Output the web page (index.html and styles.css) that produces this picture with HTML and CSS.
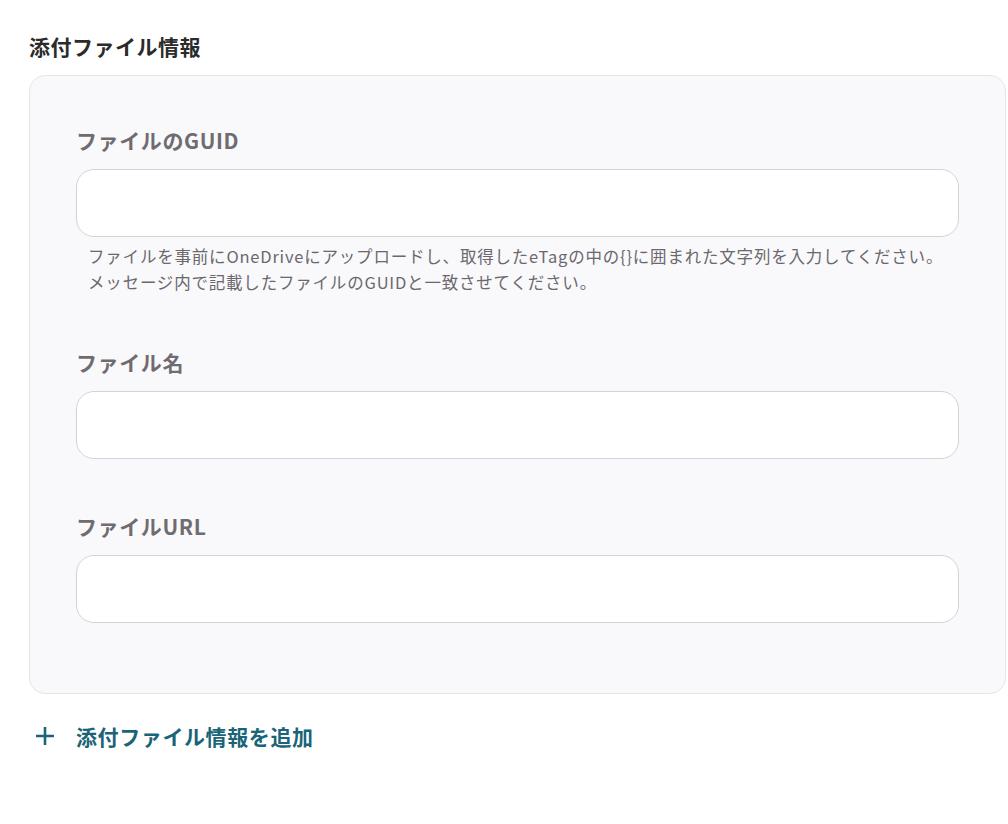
FILE: index.html
```html
<!DOCTYPE html>
<html lang="ja">
<head>
<meta charset="utf-8">
<link rel="stylesheet" href="styles.css">
</head>
<body>
<div class="page">
  <h2 class="title">添付ファイル情報</h2>
  <div class="panel">
    <div class="field">
      <label class="label">ファイルのGUID</label>
      <div class="input"></div>
      <p class="help">ファイルを事前にOneDriveにアップロードし、取得したeTagの中の{}に囲まれた文字列を入力してください。<br>メッセージ内で記載したファイルのGUIDと一致させてください。</p>
    </div>
    <div class="field">
      <label class="label">ファイル名</label>
      <div class="input"></div>
    </div>
    <div class="field">
      <label class="label">ファイルURL</label>
      <div class="input"></div>
    </div>
  </div>
  <div class="add">
    <svg class="plus" width="20" height="20" viewBox="0 0 20 20"><path d="M10 1v18M1 10h18" stroke="currentColor" stroke-width="2.6" fill="none"/></svg>
    <span>添付ファイル情報を追加</span>
  </div>
</div>
</body>
</html>
```
FILE: styles.css
```css
html, body {
  margin: 0;
  padding: 0;
  background: #ffffff;
}
body {
  font-family: "Noto Sans CJK JP", "Noto Sans", sans-serif;
}
.page {
  padding: 31px 2px 0 29px;
}
.title {
  margin: 0;
  font-size: 21px;
  letter-spacing: 0.5px;
  line-height: 30px;
  font-weight: 700;
  color: #2b2b2b;
}
.panel {
  margin-top: 14px;
  background: #f9f8fb;
  border: 1px solid #e6e5ea;
  border-radius: 16px;
  padding: 49px 46px 70px 46px;
  display: flex;
  flex-direction: column;
  gap: 52px;
}
.field {
  display: flex;
  flex-direction: column;
}
.label {
  font-size: 21px;
  letter-spacing: 0.6px;
  line-height: 30px;
  font-weight: 700;
  color: #6f6c71;
  margin-bottom: 14px;
}
.input {
  height: 66px;
  background: #ffffff;
  border: 1px solid #d3d2da;
  border-radius: 18px;
}
.help {
  margin: 6px 0 0 12px;
  font-size: 16.5px;
  letter-spacing: 0.8px;
  line-height: 26px;
  color: #6a686d;
}
.add {
  display: flex;
  align-items: center;
  margin-top: 28px;
  color: #1a6478;
  font-size: 21px;
  letter-spacing: 0.6px;
  line-height: 28px;
  font-weight: 700;
}
.plus {
  margin-left: 6px;
  margin-right: 21px;
}
```
